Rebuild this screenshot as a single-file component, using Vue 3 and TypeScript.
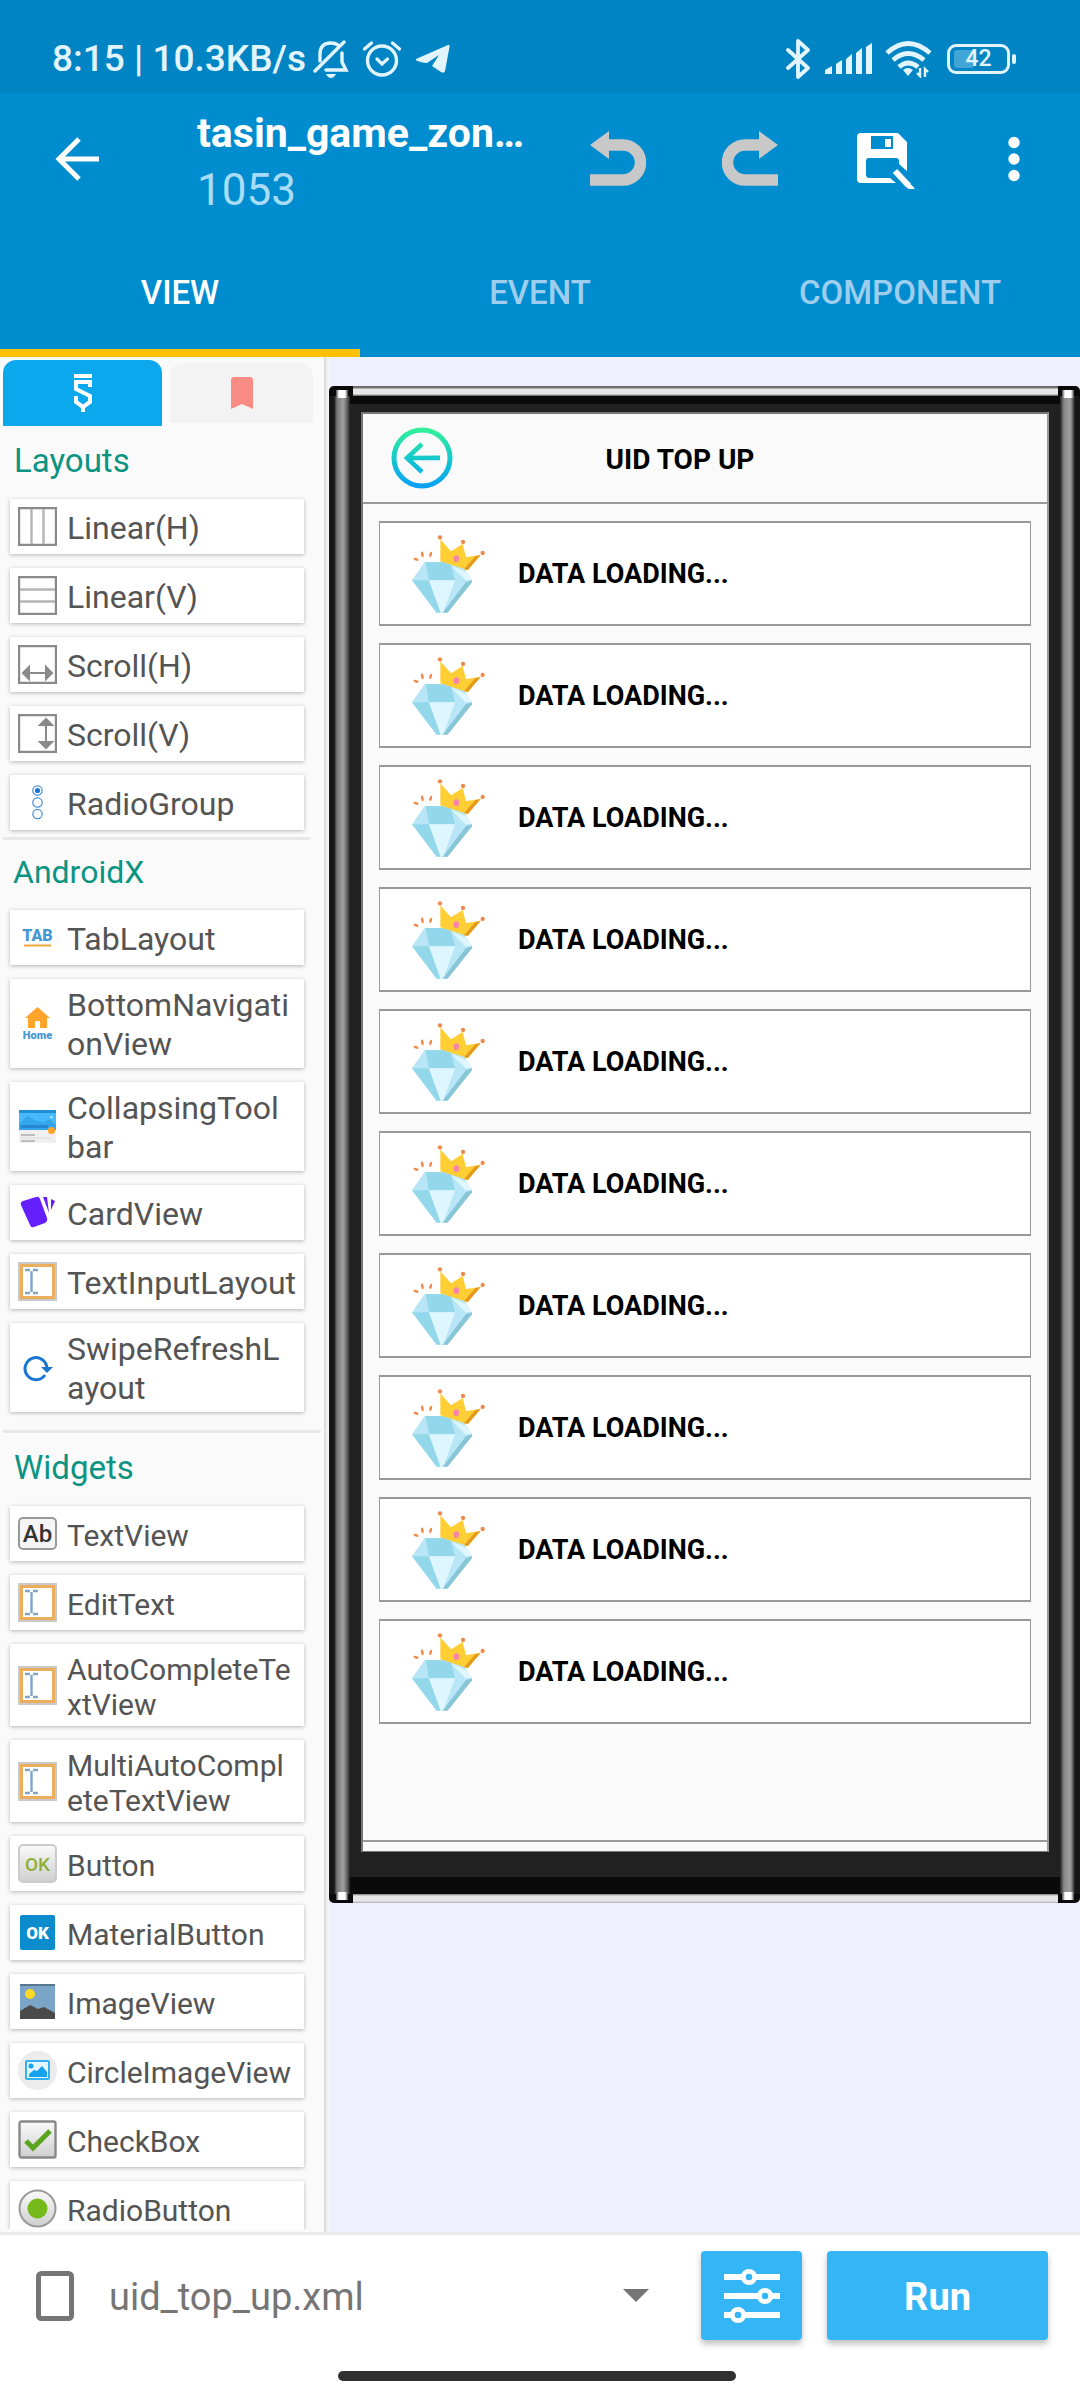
<script setup lang="ts">
import { ref } from 'vue'

interface PaletteItem {
  icon: string
  label: string
}

interface PaletteSection {
  title: string
  kind: string
  items: PaletteItem[]
}

const tabs = ['VIEW', 'EVENT', 'COMPONENT']
const activeTab = ref('VIEW')

const sections: PaletteSection[] = [
  {
    title: 'Layouts',
    kind: 'layouts',
    items: [
      { icon: 'linear-h', label: 'Linear(H)' },
      { icon: 'linear-v', label: 'Linear(V)' },
      { icon: 'scroll-h', label: 'Scroll(H)' },
      { icon: 'scroll-v', label: 'Scroll(V)' },
      { icon: 'radio-group', label: 'RadioGroup' },
    ],
  },
  {
    title: 'AndroidX',
    kind: 'androidx',
    items: [
      { icon: 'tab', label: 'TabLayout' },
      { icon: 'home', label: 'BottomNavigati\nonView' },
      { icon: 'collapsing', label: 'CollapsingTool\nbar' },
      { icon: 'card', label: 'CardView' },
      { icon: 'edit', label: 'TextInputLayout' },
      { icon: 'refresh', label: 'SwipeRefreshL\nayout' },
    ],
  },
  {
    title: 'Widgets',
    kind: 'widgets',
    items: [
      { icon: 'text', label: 'TextView' },
      { icon: 'edit', label: 'EditText' },
      { icon: 'edit', label: 'AutoCompleteTe\nxtView' },
      { icon: 'edit', label: 'MultiAutoCompl\neteTextView' },
      { icon: 'button', label: 'Button' },
      { icon: 'material', label: 'MaterialButton' },
      { icon: 'image', label: 'ImageView' },
      { icon: 'circle-image', label: 'CircleImageView' },
      { icon: 'check', label: 'CheckBox' },
      { icon: 'radio', label: 'RadioButton' },
    ],
  },
]

const rows = Array.from({ length: 10 }, () => 'DATA LOADING...')
const file = ref('uid_top_up.xml')
</script>

<template>
  <div class="app">
    <div class="status">
      <span class="clock">8:15 | 10.3KB/s</span>
      <svg class="s-bell" width="36" height="40" viewBox="0 0 36 40" fill="none" stroke="#e2f5ff" stroke-width="3.4" stroke-linecap="round">
        <path d="M7 22V15Q7 4 18 4Q22 4 25 6M29 14V23L33 31H13" />
        <path d="M2 32L31 3" />
        <path d="M13 35H23Q21 39 18 39Q15 39 13 35Z" fill="#e2f5ff" stroke="none" />
      </svg>
      <svg class="s-alarm" width="40" height="40" viewBox="0 0 40 40" fill="none" stroke="#e2f5ff" stroke-width="3.4" stroke-linecap="round">
        <circle cx="20" cy="21.500" r="14.500" />
        <path d="M15 20L20 25L25.500 20" stroke-width="3.200" />
        <path d="M2.500 10L9.500 4M37.500 10L30.500 4" />
      </svg>
      <svg class="s-send" width="36" height="32" viewBox="0 0 36 32" fill="#e2f5ff">
        <path d="M1 16L33 2Q35 1 34.500 4L30 28Q29 31 26 29L17 23L24 12L12 20Q8 20 1 17.500Z" />
      </svg>
      <span class="spacer"></span>
      <svg class="s-bt" width="26" height="42" viewBox="0 0 26 42" fill="none" stroke="#e2f5ff" stroke-width="3.8" stroke-linejoin="round" stroke-linecap="round">
        <path d="M2 12L22 30L12 39V3L22 12L2 30" />
      </svg>
      <svg class="s-signal" width="48" height="32" viewBox="0 0 48 32" fill="#e2f5ff">
        <path d="M0 31V27L7 23V31ZM11 31V21L17 17V31ZM21 31V16L27 11V31ZM31 31V10L37 5V31ZM41 31V4L47 0V31Z" />
      </svg>
      <svg class="s-wifi" width="48" height="38" viewBox="0 0 48 38" fill="none" stroke="#e2f5ff" stroke-width="4.8">
        <path d="M2 13Q23 -6 45 13M8 20Q23 7 39 20M14 27Q23 19 33 27" />
        <path d="M18 30Q23 26 28 30L23 36Z" fill="#e2f5ff" stroke="none" />
        <path d="M35 28V36L32 33M40 37V29L43 32" stroke-width="2.400" />
      </svg>
      <span class="battery"><span class="charge"></span><span class="level">42</span></span>
    </div>

    <header class="toolbar">
      <button class="tool back" aria-label="Back">
        <svg width="44" height="46" viewBox="0 0 44 46" fill="none" stroke="#fff" stroke-width="5">
          <path d="M24 3L4 23L24 43M4 23H44" />
        </svg>
      </button>
      <div class="titles">
        <h1>tasin_game_zon…</h1>
        <p>1053</p>
      </div>
      <button class="tool" aria-label="Undo">
        <svg width="56" height="56" viewBox="0 0 56 56">
          <path d="M0 14L19 0V28Z" fill="#c8c8c8" />
          <path d="M17 14H33A17.500 17.500 0 0 1 33 49H0" fill="none" stroke="#c8c8c8" stroke-width="11.500" />
        </svg>
      </button>
      <button class="tool" aria-label="Redo">
        <svg width="56" height="56" viewBox="0 0 56 56">
          <path d="M56 14L37 0V28Z" fill="#c8c8c8" />
          <path d="M39 14H23A17.500 17.500 0 0 0 23 49H56" fill="none" stroke="#c8c8c8" stroke-width="11.500" />
        </svg>
      </button>
      <button class="tool" aria-label="Save">
        <svg width="68" height="60" viewBox="-9 -4 68 60">
          <path d="M4 0H41L50 9V38L42 31V28Q42 25 39 25H12Q9 25 9 28V41Q9 45 12 45H33L39 50H4Q0 50 0 46V4Q0 0 4 0Z" fill="#fff" />
          <path d="M14 3H36V16H14Z" fill="#008dcf" />
          <path d="M28 6H34V14H28Z" fill="#fff" />
          <path d="M38 38L52 53" stroke="#fff" stroke-width="6" />
          <path d="M53 54L55 56" stroke="#fff" stroke-width="5" stroke-linecap="round" />
        </svg>
      </button>
      <button class="tool" aria-label="More options">
        <svg width="12" height="46" viewBox="0 0 12 46" fill="#fff">
          <circle cx="6" cy="6.500" r="5.700" /><circle cx="6" cy="23" r="5.700" /><circle cx="6" cy="39.500" r="5.700" />
        </svg>
      </button>
    </header>

    <nav class="tabs">
      <button v-for="tab in tabs" :key="tab" :class="{ active: tab === activeTab }" @click="activeTab = tab">{{ tab }}</button>
    </nav>

    <main class="body">
      <aside class="palette">
        <div class="palette-tabs">
          <button class="p-main" aria-label="Widgets palette">
            <svg width="20" height="38" viewBox="0 0 20 38" fill="none" stroke="#fff" stroke-width="4">
              <path d="M1 2H19M17 13V8H3V15L17 22V28L10 33L3 28V22M10 32V38" />
            </svg>
          </button>
          <button class="p-saved" aria-label="Saved widgets">
            <svg width="22" height="32" viewBox="0 0 22 32"><path d="M3 0H19Q22 0 22 3V32L11 27L0 32V3Q0 0 3 0Z" fill="#f88c84" /></svg>
          </button>
        </div>
        <section v-for="section in sections" :key="section.title" :class="['group', section.kind]">
          <h2>{{ section.title }}</h2>
          <ul>
            <li v-for="item in section.items" :key="item.label">
              <svg width="39" height="39" viewBox="0 0 39 39">
                <g v-if="item.icon === 'linear-h' || item.icon === 'linear-v'" fill="none" stroke="#8a8a8a">
                  <path d="M1 1H38V38H1Z" stroke-width="2.400" />
                  <path :d="item.icon === 'linear-h' ? 'M13.500 2V37M25.500 2V37' : 'M2 13.500H37M2 25.500H37'" stroke="#b4b4b4" stroke-width="2.400" />
                </g>
                <g v-else-if="item.icon === 'scroll-h' || item.icon === 'scroll-v'" fill="#8a8a8a" stroke="#8a8a8a">
                  <path d="M1 1H38V38H1Z" fill="none" stroke-width="2.400" />
                  <path v-if="item.icon === 'scroll-h'" d="M8 28H31M5 28L11 22V34ZM34 28L28 22V34Z" stroke-width="2" />
                  <path v-else d="M28 8V31M28 5L22 11H34ZM28 34L22 28H34Z" stroke-width="2" />
                </g>
                <g v-else-if="item.icon === 'radio-group'" fill="none" stroke="#4a8fd8" stroke-width="1.200">
                  <circle cx="19.500" cy="7.500" r="4.700" /><circle cx="19.500" cy="19.500" r="4.700" /><circle cx="19.500" cy="31" r="4.700" />
                  <circle cx="19.500" cy="7.500" r="2.600" fill="#1976d2" stroke="none" />
                </g>
                <g v-else-if="item.icon === 'tab'">
                  <text x="19.500" y="23" text-anchor="middle" font-size="16" font-weight="900" fill="#4598d3">TAB</text>
                  <path d="M6 27.500H33" stroke="#f5a742" stroke-width="2" />
                </g>
                <g v-else-if="item.icon === 'home'">
                  <path d="M19.500 3L32 14H29V24H22V17H17V24H10V14H7Z" fill="#ffa42b" />
                  <text x="19.500" y="35" text-anchor="middle" font-size="11" font-weight="900" fill="#4598d3">Home</text>
                </g>
                <g v-else-if="item.icon === 'collapsing'">
                  <path d="M1 3H38V36H1Z" fill="#f0f0f0" />
                  <path d="M1 3H38V23H1Z" fill="#45b9fa" /><path d="M1 3H38V6H1Z" fill="#1f8ed4" />
                  <path d="M1 17L10 9L18 14L26 15L31 12L38 18V23H1Z" fill="#32a5ec" />
                  <path d="M3 18H30V21H3Z" fill="#2486cf" /><circle cx="33.500" cy="10" r="1.500" fill="#9ae0ff" />
                  <circle cx="33.500" cy="23.500" r="3.600" fill="#ffa42b" />
                  <path d="M3 28H17M3 34H17" stroke="#bdbdbd" stroke-width="2" /><path d="M3 31H33" stroke="#d9d9d9" />
                </g>
                <g v-else-if="item.icon === 'card'" fill="#651fff">
                  <path d="M5 8L18 4Q21 3 22 6L29 25Q30 28 27 30L16 34Q13 35 12 32L3 12Q2 9 5 8Z" />
                  <path d="M25 4H29L31 20ZM33 6L37 8L33 17Z" />
                </g>
                <g v-else-if="item.icon === 'edit'" fill="none">
                  <path d="M1 1H38V38H1Z" stroke="#c9c9c9" stroke-width="2" /><path d="M3.500 3.500H35.500V35.500H3.500Z" stroke="#eaae5d" stroke-width="3" />
                  <path d="M13.500 9V30M7 8H12M15 8H20M7 31H12M15 31H20" stroke="#7ea6c8" stroke-width="2.400" />
                </g>
                <g v-else-if="item.icon === 'refresh'">
                  <path d="M27 27A11 11 0 1 1 29 20" fill="none" stroke="#1976d2" stroke-width="3" /><path d="M23 19H35L29 25Z" fill="#1976d2" />
                </g>
                <g v-else-if="item.icon === 'text'">
                  <rect x="1" y="4" width="37" height="31" rx="4" fill="#f5f5f5" stroke="#999" stroke-width="2" />
                  <text x="19.500" y="28" text-anchor="middle" font-size="24" font-weight="500" fill="#333">Ab</text>
                </g>
                <g v-else-if="item.icon === 'button'">
                  <rect x="1" y="1" width="37" height="37" rx="4" fill="url(#grey-shade)" stroke="#cbcbcb" stroke-width="2" />
                  <text x="19.500" y="26.500" text-anchor="middle" font-size="19" font-weight="500" fill="#8fae35">OK</text>
                </g>
                <g v-else-if="item.icon === 'material'">
                  <rect x="2" y="2" width="35" height="35" rx="2" fill="#0a8ccd" />
                  <text x="19.500" y="25.500" text-anchor="middle" font-size="17" font-weight="900" fill="#fff">OK</text>
                </g>
                <g v-else-if="item.icon === 'image'">
                  <path d="M2 2H37V37H2Z" fill="#7ba5c6" /><path d="M2 2H37V4H2Z" fill="#57788f" />
                  <circle cx="12" cy="12" r="5" fill="#fdd926" /><path d="M2 29L12 23L20 27L26 25L37 31V37H2Z" fill="#4a4a4a" />
                </g>
                <g v-else-if="item.icon === 'circle-image'">
                  <circle cx="19.500" cy="19.500" r="19.500" fill="#ececec" />
                  <rect x="8" y="10" width="23" height="18" rx="1" fill="#e3f6ff" stroke="#35b0ee" stroke-width="2" />
                  <circle cx="13" cy="15" r="2.500" fill="#16a2ec" /><path d="M11 26V23L16 19L19 20L24 15L29 21V26Z" fill="#16a2ec" />
                </g>
                <g v-else-if="item.icon === 'check'">
                  <rect x="1.500" y="1.500" width="36" height="36" rx="2" fill="url(#grey-shade)" stroke="#888" stroke-width="2.400" />
                  <path d="M8 21L15 28L32 11" fill="none" stroke="#5aa51f" stroke-width="5" />
                </g>
                <g v-else>
                  <circle cx="19.500" cy="19.500" r="18" fill="url(#grey-shade)" stroke="#999" stroke-width="2" />
                  <circle cx="19.500" cy="19.500" r="10" fill="#76b91a" />
                </g>
              </svg>
              <span>{{ item.label }}</span>
            </li>
          </ul>
        </section>
      </aside>

      <div class="canvas">
        <div class="phone">
          <div class="screen">
            <div class="screen-head">
              <svg width="62" height="62" viewBox="0 0 62 62" fill="none" stroke="url(#mint-blue)">
                <circle cx="31" cy="31" r="28" stroke-width="5" />
                <path d="M31 17L16 31L31 45M16 31L49 30.900" stroke-width="4.600" />
              </svg>
              <strong>UID TOP UP</strong>
            </div>
            <div class="list">
              <div v-for="(row, i) in rows" :key="i" class="row">
                <svg width="75" height="80" viewBox="93 66 225 240">
                  <path d="M96 205L134 150H240L276 205L197 302H170Z" fill="#b8e6f7" />
                  <path d="M96 205H147L182 302H170Z" fill="#92d8ea" />
                  <path d="M137 150H186L213 158L225 205H147Z" fill="#92d8ea" />
                  <path d="M147 205H225L190 302H182Z" fill="#ddf6ff" />
                  <path d="M213 160L262 182L276 205H256Z" fill="#ddf6ff" />
                  <path d="M276 205V211L203 302H188L258 210Z" fill="#87c6d6" />
                  <path d="M181 82L213 118L248 96L258 135L302 129L262 174L181 148Z" fill="#ffce35" />
                  <path d="M302 129L264 174L252 172L286 132Z" fill="#e39a1d" />
                  <ellipse cx="229" cy="140" rx="8" ry="10" fill="#f684a9" />
                  <g fill="#ee8a4c">
                    <circle cx="180" cy="76" r="6.500" /><circle cx="249" cy="90" r="6.500" /><circle cx="308" cy="123" r="6.500" />
                    <ellipse cx="108" cy="142" rx="8" ry="4" transform="rotate(22 108 142)" />
                    <ellipse cx="127" cy="127" rx="4" ry="9" transform="rotate(-12 127 127)" />
                    <ellipse cx="152" cy="127" rx="4" ry="8" transform="rotate(18 152 127)" />
                  </g>
                </svg>
                <strong>{{ row }}</strong>
              </div>
            </div>
            <div class="screen-foot"></div>
          </div>
        </div>
      </div>
    </main>

    <footer class="bottom">
      <div class="controls">
        <svg width="38" height="50" viewBox="0 0 38 50" fill="none" stroke="#757575" stroke-width="5">
          <rect x="2.500" y="2.500" width="33" height="45" rx="3" />
        </svg>
        <div class="picker">
          <select v-model="file" aria-label="Layout file"><option>uid_top_up.xml</option></select>
          <span class="caret"></span>
        </div>
        <button class="action tune" aria-label="Layout settings">
          <svg width="56" height="56" viewBox="0 0 56 56" fill="none" stroke="#fff" stroke-width="6">
            <path d="M0 9H19M31 9H56M0 28H35M47 28H56M0 47H8M20 47H56" />
            <circle cx="25" cy="9" r="5.700" stroke-width="4.800" /><circle cx="41" cy="28" r="5.700" stroke-width="4.800" /><circle cx="14" cy="47" r="5.700" stroke-width="4.800" />
          </svg>
        </button>
        <button class="action run">Run</button>
      </div>
      <span class="pill"></span>
    </footer>

    <svg class="defs" width="0" height="0" aria-hidden="true">
      <defs>
        <linearGradient id="grey-shade" x1="0" y1="0" x2="0" y2="1"><stop offset="0" stop-color="#fafafa" /><stop offset="1" stop-color="#cfcfcf" /></linearGradient>
        <linearGradient id="mint-blue" gradientUnits="userSpaceOnUse" x1="0" y1="2" x2="0" y2="60"><stop offset="0" stop-color="#33f09a" /><stop offset="0.500" stop-color="#15c9cd" /><stop offset="1" stop-color="#0aa0f5" /></linearGradient>
      </defs>
    </svg>
  </div>
</template>

<style>
body {
  margin: 0;
}
</style>

<style scoped>
.app {
  display: flex;
  flex-direction: column;
  height: 100vh;
  overflow: hidden;
  background: #fff;
  font-family: Roboto, sans-serif;
}
.app * {
  box-sizing: border-box;
}
button {
  border: 0;
  padding: 0;
  background: none;
  font-family: inherit;
}
h1, h2, p, ul {
  margin: 0;
  padding: 0;
}
svg {
  display: block;
  flex: none;
}
.defs {
  position: absolute;
}

.status {
  display: flex;
  align-items: center;
  flex: none;
  height: 93px;
  padding: 24px 70px 0 52px;
  background: #0084c3;
  color: #e2f5ff;
}
.clock {
  font-size: 37px;
  line-height: 42px;
  font-weight: 500;
  margin-right: 7px;
  white-space: nowrap;
}
.s-alarm, .s-send {
  margin-left: 13px;
}
.spacer {
  flex: 1;
}
.s-signal {
  margin-left: 13px;
}
.s-wifi {
  margin-left: 12px;
}
.battery {
  position: relative;
  display: flex;
  align-items: center;
  justify-content: center;
  width: 63px;
  height: 30px;
  margin-left: 14px;
  border: 3px solid #e2f5ff;
  border-radius: 9px;
}
.battery::after {
  content: '';
  position: absolute;
  right: -9px;
  width: 4px;
  height: 10px;
  border-radius: 2px;
  background: #e2f5ff;
}
.charge {
  position: absolute;
  left: 4px;
  width: 20px;
  height: 18px;
  border-radius: 3px;
  background: #42a5d8;
}
.level {
  position: relative;
  font-size: 23px;
  line-height: 24px;
  font-weight: 500;
}

.toolbar {
  display: flex;
  align-items: center;
  flex: none;
  height: 132px;
  background: #008dcf;
}
.tool {
  display: flex;
  align-items: center;
  justify-content: center;
  width: 132px;
  height: 132px;
}
.tool.back {
  width: 154px;
}
.titles {
  flex: 1;
  min-width: 0;
  margin-left: 43px;
  padding-top: 10px;
  color: #fff;
}
.titles h1 {
  font-size: 41px;
  line-height: 52px;
  font-weight: 700;
  white-space: nowrap;
}
.titles p {
  font-size: 44px;
  line-height: 62px;
  color: #a9dcf6;
}
.tabs {
  display: flex;
  flex: none;
  height: 132px;
  background: #008dcf;
}
.tabs button {
  flex: 1;
  border-bottom: 8px solid transparent;
  padding-top: 10px;
  color: #9fcdee;
  font-size: 33px;
  font-weight: 500;
}
.tabs .active {
  color: #fff;
  border-color: #ffc107;
}

.body {
  display: flex;
  flex: 1;
  min-height: 0;
  background: #fafafa;
}
.palette {
  width: 30%;
  min-width: 324px;
  margin-bottom: 3px;
  overflow: hidden;
}
.palette-tabs {
  display: flex;
  align-items: center;
  gap: 8px;
  padding: 3px 11px 0 3px;
}
.palette-tabs button {
  display: flex;
  align-items: center;
  justify-content: center;
}
.p-main {
  flex: 159;
  height: 66px;
  border-radius: 13px 13px 0 0;
  background: #0ba8ed;
}
.p-saved {
  flex: 143;
  height: 60px;
  border-radius: 13px 13px 0 0;
  background: #f3f3f3;
}
.group h2 {
  padding: 15px 14px 19px;
  color: #0b9482;
  font-size: 33px;
  line-height: 39px;
  font-weight: 400;
}
.group ul {
  display: flex;
  flex-direction: column;
  gap: 14px;
  padding: 0 20px 0 10px;
  list-style: none;
}
.group li {
  display: flex;
  align-items: center;
  gap: 10px;
  min-height: 55px;
  padding: 5px 0 6px 8px;
  background: #fff;
  box-shadow: 0 1px 4px rgba(0, 0, 0, 0.28);
  color: #545454;
  font-size: 32px;
  line-height: 39px;
  white-space: pre;
}
.group li span {
  padding-top: 2px;
  margin-bottom: -2px;
}
.group.layouts::after,
.group.androidx::after {
  content: '';
  display: block;
  height: 3px;
  background: #e8e8e8;
}
.group.layouts::after {
  margin: 7px 14px 0 3px;
}
.group.androidx::after {
  margin: 18px 3px 0;
}
.group.androidx h2 {
  padding: 13px 13px 18px;
  font-size: 32px;
}
.group.widgets li {
  padding: 6px 0 6px 8px;
  font-size: 30px;
  line-height: 35px;
}

.canvas {
  flex: 1;
  min-width: 0;
  padding-top: 29px;
  border-left: 5px solid transparent;
  background:
    linear-gradient(90deg, #d4d4d4, #f7f7f7 4px) 0 0 / 5px 100% no-repeat border-box border-box,
    linear-gradient(#f0efff, #f0efff) padding-box padding-box;
}
.phone {
  padding: 26px 31px 51px 32px;
  border-radius: 5px;
  background:
    linear-gradient(90deg, #444, #fff 3px 9px, #444) 7px 4px / 12px 8px no-repeat,
    linear-gradient(90deg, #444, #fff 3px 9px, #444) calc(100% - 6px) 4px / 12px 8px no-repeat,
    linear-gradient(90deg, #444, #fff 3px 9px, #444) 7px calc(100% - 3px) / 12px 8px no-repeat,
    linear-gradient(90deg, #444, #fff 3px 9px, #444) calc(100% - 6px) calc(100% - 3px) / 12px 8px no-repeat,
    linear-gradient(#666, #777 2px, #e6e6e6 3px 8px, #555) 24px 0 / calc(100% - 46px) 10px no-repeat,
    linear-gradient(#777, #e6e6e6 2px 7px, #aaa) 24px 100% / calc(100% - 46px) 9px no-repeat,
    linear-gradient(90deg, #151515 5px, #777 8px, #a0a0a0 14px, #777 17px, #212121 21px) 0 10px / 21px calc(100% - 19px) no-repeat,
    linear-gradient(90deg, #212121, #888 4px, #a0a0a0 10px, #777 12px, #151515 15px) 100% 10px / 20px calc(100% - 19px) no-repeat,
    linear-gradient(#0a0a0a, #0a0a0a) 0 0 / 100% 18px no-repeat,
    linear-gradient(#0a0a0a, #0a0a0a) 0 100% / 100% 26px no-repeat,
    #212121;
}
.screen {
  border: 2px solid #777;
  border-right-color: #999;
  border-bottom-width: 1px;
  background: #fafafa;
}
.screen-head {
  display: flex;
  align-items: center;
  position: relative;
  height: 90px;
  padding-left: 28px;
  border-bottom: 2px solid #999;
}
.screen strong {
  padding-top: 2px;
  color: #000;
  font-size: 27px;
  line-height: 33px;
  font-weight: 700;
}
.screen-head strong {
  position: absolute;
  left: 0;
  right: 50px;
  text-align: center;
  font-size: 28px;
}
.list {
  display: flex;
  flex-direction: column;
  gap: 17px;
  padding: 17px 16px 116px;
  border-bottom: 2px solid #999;
}
.row {
  display: flex;
  align-items: center;
  gap: 32px;
  height: 105px;
  padding-left: 31px;
  border: 1px solid #999;
  border-top-width: 2px;
  border-bottom-width: 2px;
  background: #fff;
}
.screen-foot {
  height: 9px;
}

.bottom {
  flex: none;
  height: 168px;
  border-top: 3px solid #ebebeb;
  background: #fff;
}
.controls {
  display: flex;
  align-items: center;
  padding: 16px 32px 0 36px;
}
.picker {
  position: relative;
  display: flex;
  align-items: center;
  flex: 1;
  margin: 0 52px 0 35px;
}
.picker select {
  width: 100%;
  height: 60px;
  padding: 2px 0 0;
  border: 0;
  appearance: none;
  background: none;
  color: #757575;
  font-family: inherit;
  font-size: 38px;
}
.caret {
  position: absolute;
  right: 0;
  border: 13px solid transparent;
  border-top-color: #757575;
  border-bottom: 0;
}
.action {
  display: flex;
  align-items: center;
  justify-content: center;
  height: 89px;
  border-radius: 4px;
  background: #34b6f6;
  box-shadow: 0 4px 6px rgba(0, 0, 0, 0.25);
  color: #fff;
  font-size: 38px;
  font-weight: 700;
}
.tune {
  width: 101px;
}
.run {
  width: 221px;
  padding-top: 2px;
  margin-left: 25px;
}
.pill {
  display: block;
  width: 398px;
  height: 10px;
  margin: 31px auto 0 calc(50% - 202px);
  border-radius: 5px;
  background: #303030;
}
</style>
